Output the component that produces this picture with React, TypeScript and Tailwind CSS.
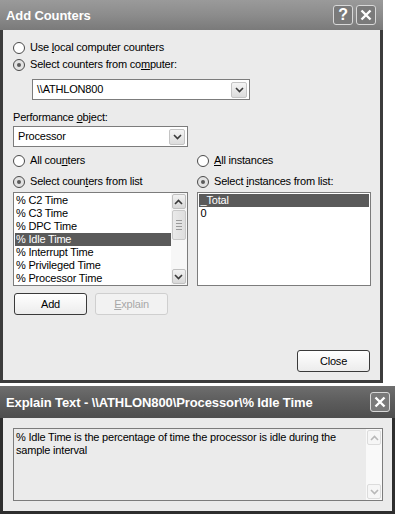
import React from 'react';

const ui = "font-['Liberation_Sans',Arial,sans-serif] text-[11px] leading-[13px] tracking-[-0.2px] text-black";

const Radio = ({ checked, label }: { checked?: boolean; label: React.ReactNode }) => (
    <div className="flex items-center gap-[5px] h-[13px]">
        <div className={`w-[12px] h-[12px] rounded-full border border-[#4a4a4a] flex items-center justify-center ${checked ? 'bg-[#e2e2e2]' : 'bg-white'}`}>
            {checked && <div className="w-[4px] h-[4px] rounded-full bg-[#5a5a5a]" />}
        </div>
        <span>{label}</span>
    </div>
);

const Chevron = ({ up, light }: { up?: boolean; light?: boolean }) => (
    <svg width="9" height="6" viewBox="0 0 9 6">
        <path d={up ? 'M1 5 L4.5 1.5 L8 5' : 'M1 1 L4.5 4.5 L8 1'} fill="none" stroke={light ? '#b8b8b8' : '#3a3a3a'} strokeWidth="1.6" />
    </svg>
);

const DropBtn = () => (
    <div className="w-[16px] h-[16px] rounded-[2px] border border-[#c4c4c4] bg-gradient-to-b from-[#f4f4f4] to-[#dcdcdc] flex items-center justify-center">
        <Chevron />
    </div>
);

const Combo = ({ value, className }: { value: string; className: string }) => (
    <div className={`h-[21px] border border-[#7c7c7c] bg-white flex items-center justify-between pl-[4px] pr-[2px] ${className}`}>
        <span>{value}</span>
        <DropBtn />
    </div>
);

const ScrollBtn = ({ up, light }: { up?: boolean; light?: boolean }) => (
    <div className={`w-[14px] h-[15px] rounded-[2px] border ${light ? 'border-[#dcdcdc] bg-[#f6f6f6]' : 'border-[#c0c0c0] bg-gradient-to-b from-[#f2f2f2] to-[#d8d8d8]'} flex items-center justify-center`}>
        <Chevron up={up} light={light} />
    </div>
);

const TitleBtn = ({ children }: { children: React.ReactNode }) => (
    <div className="w-[20px] h-[20px] rounded-[3px] border border-[#d8d8d8] bg-[#7a7a7a] text-white flex items-center justify-center font-['Liberation_Sans',Arial,sans-serif] font-bold text-[16px] leading-none">
        {children}
    </div>
);

const XIcon = () => (
    <svg width="12" height="12" viewBox="0 0 12 12">
        <path d="M1.5 1.5 L10.5 10.5 M10.5 1.5 L1.5 10.5" stroke="white" strokeWidth="2.4" />
    </svg>
);

const counters = ['% C2 Time', '% C3 Time', '% DPC Time', '% Idle Time', '% Interrupt Time', '% Privileged Time', '% Processor Time'];

const titleFont = "font-['Liberation_Sans',Arial,sans-serif] font-bold text-[13px] tracking-[-0.1px] text-white";

export default function App() {
    return (
        <div className={`w-[395px] h-[514px] bg-white flex flex-col gap-[3px] overflow-hidden ${ui}`}>
            {/* Add Counters dialog */}
            <div className="w-[383px] h-[383px] bg-[#3c3c3c] p-[3px] pt-0 flex flex-col">
                <div className="h-[30px] -mx-[3px] px-[6px] flex items-center justify-between bg-gradient-to-b from-[#9a9a9a] via-[#8c8c8c] to-[#7a7a7a]">
                    <span className={titleFont}>Add Counters</span>
                    <div className="flex gap-[3px] mr-[1px]">
                        <TitleBtn>?</TitleBtn>
                        <TitleBtn><XIcon /></TitleBtn>
                    </div>
                </div>
                <div className="flex-1 bg-[#ebebeb] pl-[10px] pr-[9px] pt-[11px] flex flex-col">
                    <Radio label={<>Use <u>l</u>ocal computer counters</>} />
                    <div className="mt-[4px]"><Radio checked label={<>Select counters from co<u>m</u>puter:</>} /></div>
                    <Combo value="\\ATHLON800" className="ml-[19px] mt-[8px] w-[218px]" />
                    <div className="mt-[11px]">Performance <u>o</u>bject:</div>
                    <Combo value="Processor" className="mt-[2px] w-[175px]" />
                    <div className="flex mt-[7px]">
                        <div className="w-[184px] flex flex-col gap-[8px]">
                            <Radio label={<>All cou<u>n</u>ters</>} />
                            <Radio checked label={<>Select coun<u>t</u>ers from list</>} />
                        </div>
                        <div className="flex flex-col gap-[8px]">
                            <Radio label={<><u>A</u>ll instances</>} />
                            <Radio checked label={<>Select <u>i</u>nstances from list:</>} />
                        </div>
                    </div>
                    <div className="flex mt-[4px] gap-[9px]">
                        <div className="w-[175px] h-[94px] border border-[#7c7c7c] bg-white flex">
                            <div className="flex-1 pt-[1px] pl-[1px]">
                                {counters.map(c => (
                                    <div key={c} className={`h-[13px] pl-[1px] ${c === '% Idle Time' ? 'bg-[#5a5a5a] text-white' : ''}`}>{c}</div>
                                ))}
                            </div>
                            <div className="w-[16px] bg-[#f7f7f7] flex flex-col items-center justify-between py-[1px]">
                                <ScrollBtn up />
                                <div className="flex-1 w-full flex flex-col items-center pt-[1px]">
                                    <div className="w-[14px] h-[30px] rounded-[2px] border border-[#c8c8c8] bg-gradient-to-r from-[#eaeaea] to-[#dedede] flex flex-col items-center justify-center gap-[2px]">
                                        <div className="w-[6px] h-px bg-[#9a9a9a]" />
                                        <div className="w-[6px] h-px bg-[#9a9a9a]" />
                                        <div className="w-[6px] h-px bg-[#9a9a9a]" />
                                        <div className="w-[6px] h-px bg-[#9a9a9a]" />
                                    </div>
                                </div>
                                <ScrollBtn />
                            </div>
                        </div>
                        <div className="w-[175px] h-[94px] border border-[#7c7c7c] bg-white p-[1px]">
                            <div className="h-[13px] pl-[2px] bg-[#5a5a5a] text-white">_Total</div>
                            <div className="h-[13px] pl-[2px]">0</div>
                        </div>
                    </div>
                    <div className="flex gap-[8px] mt-[7px] ml-[1px]">
                        <div className="w-[73px] h-[22px] rounded-[3px] border border-[#3a3a3a] bg-gradient-to-b from-white to-[#ececec] flex items-center justify-center">Add</div>
                        <div className="w-[73px] h-[22px] rounded-[3px] border border-[#cfcfcf] bg-[#f2f2f2] text-[#a8a8a8] flex items-center justify-center"><span><u>E</u>xplain</span></div>
                    </div>
                    <div className="flex justify-end mt-[35px] mr-[1px]">
                        <div className="w-[73px] h-[22px] rounded-[3px] border border-[#3a3a3a] bg-gradient-to-b from-white to-[#ececec] flex items-center justify-center">Close</div>
                    </div>
                </div>
            </div>

            {/* Explain Text dialog */}
            <div className="w-[395px] h-[128px] bg-[#2e2e2e] px-[3px] pb-[3px] flex flex-col">
                <div className="h-[32px] -mx-[3px] px-[6px] flex items-center justify-between bg-gradient-to-b from-[#6e6e6e] via-[#5c5c5c] to-[#4e4e4e]">
                    <span className={titleFont}>Explain Text - \\ATHLON800\Processor\% Idle Time</span>
                    <div className="mr-[-1px]">
                        <TitleBtn><XIcon /></TitleBtn>
                    </div>
                </div>
                <div className="flex-1 bg-[#ebebeb] pt-[10px] pl-[10px] pr-[9px]">
                    <div className="h-[73px] border border-[#7c7c7c] flex">
                        <div className="flex-1 pl-[2px] pt-[2px]">
                            % Idle Time is the percentage of time the processor is idle during the<br />sample interval
                        </div>
                        <div className="w-[16px] flex flex-col items-center justify-between py-[1px] bg-[#f9f9f9]">
                            <ScrollBtn up light />
                            <ScrollBtn light />
                        </div>
                    </div>
                </div>
            </div>
        </div>
    );
}
